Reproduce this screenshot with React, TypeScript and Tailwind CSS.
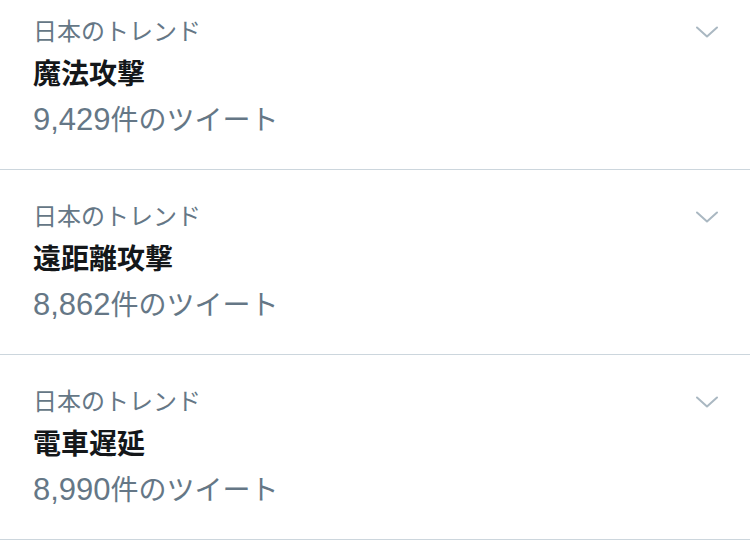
import React from "react";

const items = [
  { title: "魔法攻撃", count: "9,429" },
  { title: "遠距離攻撃", count: "8,862" },
  { title: "電車遅延", count: "8,990" },
];

function Chevron() {
  return (
    <svg width="22" height="12" viewBox="0 0 22 12" fill="none">
      <path d="M1 1.5 L11 10.5 L21 1.5" stroke="#AAB8C2" strokeWidth="2" strokeLinecap="round" strokeLinejoin="round" />
    </svg>
  );
}

export default function App() {
  return (
    <div
      className="w-[750px] bg-white -mt-[15px]"
      style={{ fontFamily: '"Liberation Sans", "Noto Sans CJK JP", sans-serif' }}
    >
      {items.map((it) => (
        <div key={it.title} className="flex border-b border-[#ccd6dd] pl-[33px] pr-[32px] pt-[31px] pb-[31px]">
          <div className="flex flex-1 flex-col gap-[9px]">
            <div className="text-[24px] leading-[32px] text-[#657786]">日本のトレンド</div>
            <div className="text-[28px] leading-[36px] font-bold text-[#14171a]">{it.title}</div>
            <div className="flex h-[36px] items-baseline text-[28px] leading-[36px] text-[#657786]">
              <span className="text-[31px] leading-[36px]">{it.count}</span>
              <span>件のツイート</span>
            </div>
          </div>
          <div className="pt-[10px]">
            <Chevron />
          </div>
        </div>
      ))}
    </div>
  );
}
